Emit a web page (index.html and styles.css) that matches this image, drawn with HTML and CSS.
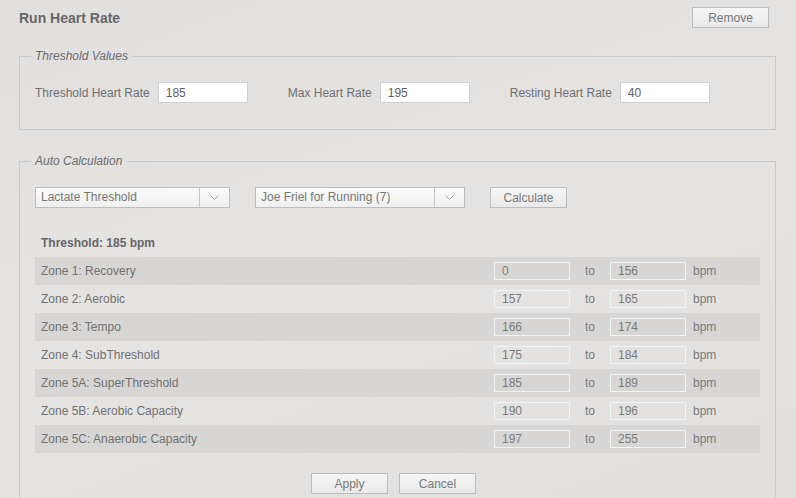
FILE: index.html
```html
<!DOCTYPE html>
<html lang="en">

<head>
    <meta charset="UTF-8">
    <title>Run Heart Rate</title>
    <link rel="stylesheet" href="styles.css">
</head>

<body>
    <div class="page">
        <div class="header">
            <h1 class="title">Run Heart Rate</h1>
            <button class="btn">Remove</button>
        </div>

        <fieldset class="group">
            <legend>Threshold Values</legend>
            <div class="values">
                <label class="field">Threshold Heart Rate <input class="value-input" type="text" value="185"></label>
                <label class="field">Max Heart Rate <input class="value-input" type="text" value="195"></label>
                <label class="field">Resting Heart Rate <input class="value-input" type="text" value="40"></label>
            </div>
        </fieldset>

        <fieldset class="group group-auto">
            <legend>Auto Calculation</legend>
            <div class="controls">
                <div class="select select-method">
                    <span class="select-text">Lactate Threshold</span>
                    <span class="select-arrow">
                        <svg width="9" height="5" viewBox="0 0 9 5"><path d="M0.5 0.5 L4.5 4.5 L8.5 0.5" fill="none" stroke="#a0a0a0" stroke-width="1"/></svg>
                    </span>
                </div>
                <div class="select select-model">
                    <span class="select-text">Joe Friel for Running (7)</span>
                    <span class="select-arrow">
                        <svg width="9" height="5" viewBox="0 0 9 5"><path d="M0.5 0.5 L4.5 4.5 L8.5 0.5" fill="none" stroke="#a0a0a0" stroke-width="1"/></svg>
                    </span>
                </div>
                <button class="btn">Calculate</button>
            </div>

            <div class="threshold">Threshold: 185 bpm</div>

            <div class="zones">
                <div class="zone">
                    <span class="zone-name">Zone 1: Recovery</span>
                    <input class="zone-input" type="text" value="0">
                    <span class="zone-to">to</span>
                    <input class="zone-input" type="text" value="156">
                    <span class="zone-unit">bpm</span>
                </div>
                <div class="zone">
                    <span class="zone-name">Zone 2: Aerobic</span>
                    <input class="zone-input" type="text" value="157">
                    <span class="zone-to">to</span>
                    <input class="zone-input" type="text" value="165">
                    <span class="zone-unit">bpm</span>
                </div>
                <div class="zone">
                    <span class="zone-name">Zone 3: Tempo</span>
                    <input class="zone-input" type="text" value="166">
                    <span class="zone-to">to</span>
                    <input class="zone-input" type="text" value="174">
                    <span class="zone-unit">bpm</span>
                </div>
                <div class="zone">
                    <span class="zone-name">Zone 4: SubThreshold</span>
                    <input class="zone-input" type="text" value="175">
                    <span class="zone-to">to</span>
                    <input class="zone-input" type="text" value="184">
                    <span class="zone-unit">bpm</span>
                </div>
                <div class="zone">
                    <span class="zone-name">Zone 5A: SuperThreshold</span>
                    <input class="zone-input" type="text" value="185">
                    <span class="zone-to">to</span>
                    <input class="zone-input" type="text" value="189">
                    <span class="zone-unit">bpm</span>
                </div>
                <div class="zone">
                    <span class="zone-name">Zone 5B: Aerobic Capacity</span>
                    <input class="zone-input" type="text" value="190">
                    <span class="zone-to">to</span>
                    <input class="zone-input" type="text" value="196">
                    <span class="zone-unit">bpm</span>
                </div>
                <div class="zone">
                    <span class="zone-name">Zone 5C: Anaerobic Capacity</span>
                    <input class="zone-input" type="text" value="197">
                    <span class="zone-to">to</span>
                    <input class="zone-input" type="text" value="255">
                    <span class="zone-unit">bpm</span>
                </div>
            </div>

            <div class="actions">
                <button class="btn">Apply</button>
                <button class="btn">Cancel</button>
            </div>
        </fieldset>
    </div>
</body>

</html>
```

FILE: styles.css
```css
* {
    margin: 0;
    box-sizing: border-box;
}

html,
body {
    height: 100%;
}

body {
    font-family: "Liberation Sans", Arial, sans-serif;
    font-size: 12px;
    line-height: 14px;
    color: #6f6f6f;
    background: linear-gradient(160deg, #e1e0df 0%, #e5e4e3 50%, #e1e0df 100%);
    overflow: hidden;
}

.page {
    padding: 0 20px 0 19px;
}

.header {
    display: flex;
    justify-content: space-between;
    align-items: flex-start;
    height: 49px;
    padding: 7px 7px 0 0;
}

.title {
    font-size: 14px;
    font-weight: bold;
    color: #676767;
    line-height: 18px;
    margin-top: 2px;
}

.btn {
    width: 77px;
    height: 21px;
    padding: 0;
    border: 1px solid #bdbdbd;
    border-radius: 0;
    background: linear-gradient(#f6f6f6, #e9e9e9);
    font-family: inherit;
    font-size: 12px;
    color: #777;
    cursor: pointer;
}

.group {
    border: 1px solid #cbcaca;
    padding: 0 15px;
    min-width: 0;
}

.group legend {
    padding: 0 4px;
    margin-left: -4px;
    font-style: italic;
    color: #6a6a6a;
    line-height: 14px;
}

.values {
    display: flex;
    gap: 40px;
    padding: 19px 0 26px;
}

.field {
    display: flex;
    align-items: center;
    gap: 8px;
}

.value-input {
    width: 90px;
    height: 21px;
    border: 1px solid #cfcfcf;
    background: #fff;
    padding: 0 7px;
    font-family: inherit;
    font-size: 12px;
    color: #5f5f5f;
    outline: none;
}

.group-auto {
    margin-top: 24px;
    height: 400px;
}

.controls {
    display: flex;
    gap: 25px;
    padding-top: 19px;
}

.select {
    display: flex;
    height: 21px;
    border: 1px solid #bdbdbd;
    background: linear-gradient(#fbfbfb, #efefef);
}

.select-method {
    width: 195px;
}

.select-model {
    width: 210px;
}

.select-text {
    flex: 1;
    padding-left: 5px;
    line-height: 19px;
    color: #777;
}

.select-arrow {
    width: 30px;
    border-left: 1px solid #c4c4c4;
    display: flex;
    align-items: center;
    justify-content: center;
}

.threshold {
    font-weight: bold;
    color: #666;
    padding: 28px 0 7px 6px;
}

.zone {
    display: flex;
    align-items: center;
    height: 28px;
}

.zone:nth-child(odd) {
    background: #d7d6d5;
}

.zone-name {
    flex: 1;
    padding-left: 6px;
    color: #707070;
}

.zone-input {
    width: 76px;
    height: 18px;
    border: 1px solid #f3f3f3;
    background: transparent;
    padding: 0 7px;
    font-family: inherit;
    font-size: 12px;
    color: #7a7a7a;
    outline: none;
}

.zone-to {
    width: 40px;
    text-align: center;
    color: #7a7a7a;
}

.zone-unit {
    width: 74px;
    padding-left: 7px;
    color: #7a7a7a;
}

.actions {
    display: flex;
    justify-content: center;
    gap: 11px;
    padding: 20px 8px 0 0;
}
```
